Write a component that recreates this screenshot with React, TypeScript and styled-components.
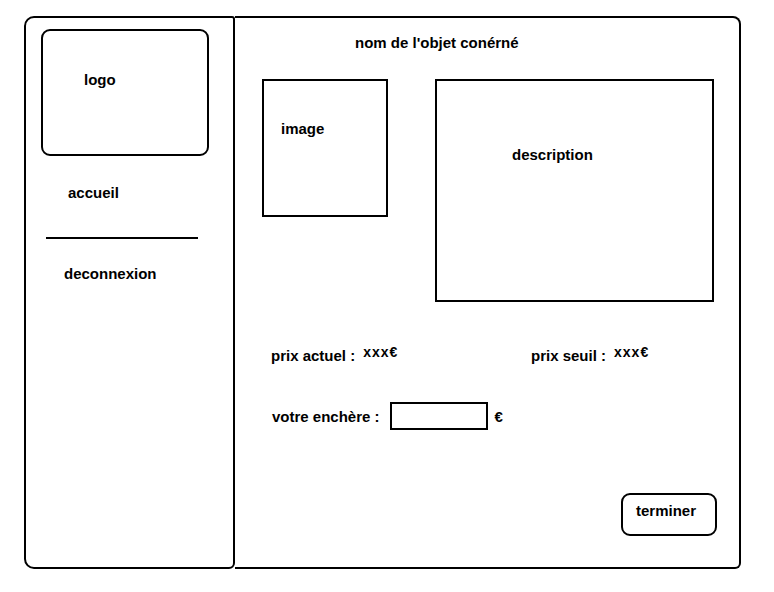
import React from 'react'
import styled, { createGlobalStyle } from 'styled-components'

const GlobalStyle = createGlobalStyle`
  html, body {
    margin: 0;
    padding: 0;
    background: #fff;
  }
  body {
    font-family: 'Liberation Sans', Arial, sans-serif;
    font-weight: bold;
    font-size: 15px;
    line-height: 17px;
    color: #000;
  }
`

const Frame = styled.div`
  display: flex;
  width: 717px;
  height: 553px;
  margin: 16px 0 0 24px;
`

const Sidebar = styled.aside`
  box-sizing: border-box;
  width: 211px;
  height: 100%;
  border: 2px solid #000;
  border-radius: 10px 3px 6px 10px;
  display: flex;
  flex-direction: column;
  align-items: flex-start;
`

const LogoBox = styled.div`
  box-sizing: border-box;
  width: 168px;
  height: 127px;
  margin: 11px 0 0 15px;
  padding: 40px 0 0 41px;
  border: 2px solid #000;
  border-radius: 9px;
`

const NavLink = styled.a<{ $mt: number; $ml: number }>`
  display: block;
  margin: ${(p) => p.$mt}px 0 0 ${(p) => p.$ml}px;
  color: #000;
  text-decoration: none;
  cursor: pointer;
`

const Divider = styled.hr`
  width: 152px;
  height: 2px;
  margin: 36px 0 0 20px;
  border: 0;
  background: #000;
`

const Main = styled.main`
  box-sizing: border-box;
  flex: 1;
  height: 100%;
  border: 2px solid #000;
  border-left: 0;
  border-radius: 0 8px 6px 0;
  display: flex;
  flex-direction: column;
  align-items: flex-start;
`

const Title = styled.h1`
  margin: 16px 0 0 120px;
  font-size: 15px;
  line-height: 17px;
`

const BoxesRow = styled.div`
  display: flex;
  align-items: flex-start;
  gap: 47px;
  margin: 28px 0 0 27px;
`

const Panel = styled.div<{ $w: number; $h: number; $pt: number; $pl: number }>`
  box-sizing: border-box;
  width: ${(p) => p.$w}px;
  height: ${(p) => p.$h}px;
  padding: ${(p) => p.$pt}px 0 0 ${(p) => p.$pl}px;
  border: 2px solid #000;
`

const PriceRow = styled.div`
  display: flex;
  margin: 45px 0 0 36px;
`

const PriceGroup = styled.div<{ $w?: number }>`
  display: flex;
  align-items: flex-start;
  gap: 8px;
  width: ${(p) => (p.$w ? `${p.$w}px` : 'auto')};
`

// the amounts sit a little higher and look wider than the labels
const Value = styled.span`
  font-size: 14px;
  line-height: 10px;
  letter-spacing: 1px;
`

const BidRow = styled.div`
  display: flex;
  align-items: center;
  margin: 38px 0 0 37px;
`

const BidInput = styled.input`
  box-sizing: border-box;
  width: 98px;
  height: 28px;
  margin: 0 7px 0 10px;
  border: 2px solid #000;
  border-radius: 0;
  outline: none;
  font: inherit;
`

const FinishButton = styled.button`
  box-sizing: border-box;
  align-self: flex-end;
  width: 96px;
  height: 43px;
  margin: 63px 22px 0 0;
  padding: 7px 0 15px 13px;
  border: 2px solid #000;
  border-radius: 9px;
  background: #fff;
  color: #000;
  font: inherit;
  text-align: left;
  cursor: pointer;
`

export default function App() {
  return (
    <>
      <GlobalStyle />
      <Frame>
        <Sidebar>
          <LogoBox>logo</LogoBox>
          <NavLink $mt={28} $ml={42}>accueil</NavLink>
          <Divider />
          <NavLink $mt={26} $ml={38}>deconnexion</NavLink>
        </Sidebar>
        <Main>
          <Title>nom de l'objet conérné</Title>
          <BoxesRow>
            <Panel $w={126} $h={138} $pt={39} $pl={17}>image</Panel>
            <Panel $w={279} $h={223} $pt={65} $pl={75}>description</Panel>
          </BoxesRow>
          <PriceRow>
            <PriceGroup $w={260}>
              <span>prix actuel :</span>
              <Value>xxx€</Value>
            </PriceGroup>
            <PriceGroup>
              <span>prix seuil :</span>
              <Value>xxx€</Value>
            </PriceGroup>
          </PriceRow>
          <BidRow>
            <span>votre enchère :</span>
            <BidInput type="text" />
            <span>€</span>
          </BidRow>
          <FinishButton>terminer</FinishButton>
        </Main>
      </Frame>
    </>
  )
}
